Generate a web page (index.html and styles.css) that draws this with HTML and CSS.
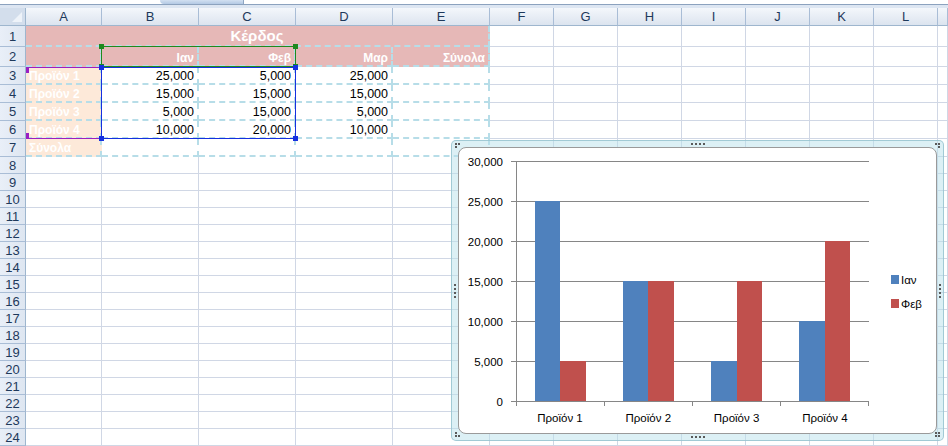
FILE: index.html
```html
<!DOCTYPE html>
<html lang="el">
<head>
<meta charset="utf-8">
<title>Κέρδος</title>
<link rel="stylesheet" href="styles.css">
</head>
<body>
<div class="sheet">
  <div class="topbar"><div class="fbar"><span class="tab"></span></div></div>

  <div class="row hdr"><div class="corner"></div><div>A</div><div>B</div><div>C</div><div>D</div><div>E</div><div>F</div><div>G</div><div>H</div><div>I</div><div>J</div><div>K</div><div>L</div><div></div></div>

  <div class="row r1"><div class="rh">1</div><div class="t pk title">Κέρδος</div><i></i><i></i><i></i><i></i><i></i><i></i><i></i><i></i></div>
  <div class="row r2"><div class="rh">2</div><div class="t pk"></div><div class="t pk hd">Ιαν</div><div class="t pk hd">Φεβ</div><div class="t pk hd">Μαρ</div><div class="t pk hd">Σύνολα</div><i></i><i></i><i></i><i></i><i></i><i></i><i></i><i></i></div>
  <div class="row r18"><div class="rh">3</div><div class="t pc">Προϊόν 1</div><div class="t num">25,000</div><div class="t num">5,000</div><div class="t num">25,000</div><div class="t"></div><i></i><i></i><i></i><i></i><i></i><i></i><i></i><i></i></div>
  <div class="row r18"><div class="rh">4</div><div class="t pc">Προϊόν 2</div><div class="t num">15,000</div><div class="t num">15,000</div><div class="t num">15,000</div><div class="t"></div><i></i><i></i><i></i><i></i><i></i><i></i><i></i><i></i></div>
  <div class="row r18"><div class="rh">5</div><div class="t pc">Προϊόν 3</div><div class="t num">5,000</div><div class="t num">15,000</div><div class="t num">5,000</div><div class="t"></div><i></i><i></i><i></i><i></i><i></i><i></i><i></i><i></i></div>
  <div class="row r18"><div class="rh">6</div><div class="t pc">Προϊόν 4</div><div class="t num">10,000</div><div class="t num">20,000</div><div class="t num">10,000</div><div class="t"></div><i></i><i></i><i></i><i></i><i></i><i></i><i></i><i></i></div>
  <div class="row r18"><div class="rh">7</div><div class="t pc">Σύνολα</div><div class="t"></div><div class="t"></div><div class="t"></div><div class="t"></div><i></i><i></i><i></i><i></i><i></i><i></i><i></i><i></i></div>

  <div class="row r17"><div class="rh">8</div><i></i><i></i><i></i><i></i><i></i><i></i><i></i><i></i><i></i><i></i><i></i><i></i><i></i></div>
  <div class="row r17"><div class="rh">9</div><i></i><i></i><i></i><i></i><i></i><i></i><i></i><i></i><i></i><i></i><i></i><i></i><i></i></div>
  <div class="row r17"><div class="rh">10</div><i></i><i></i><i></i><i></i><i></i><i></i><i></i><i></i><i></i><i></i><i></i><i></i><i></i></div>
  <div class="row r17"><div class="rh">11</div><i></i><i></i><i></i><i></i><i></i><i></i><i></i><i></i><i></i><i></i><i></i><i></i><i></i></div>
  <div class="row r17"><div class="rh">12</div><i></i><i></i><i></i><i></i><i></i><i></i><i></i><i></i><i></i><i></i><i></i><i></i><i></i></div>
  <div class="row r17"><div class="rh">13</div><i></i><i></i><i></i><i></i><i></i><i></i><i></i><i></i><i></i><i></i><i></i><i></i><i></i></div>
  <div class="row r17"><div class="rh">14</div><i></i><i></i><i></i><i></i><i></i><i></i><i></i><i></i><i></i><i></i><i></i><i></i><i></i></div>
  <div class="row r17"><div class="rh">15</div><i></i><i></i><i></i><i></i><i></i><i></i><i></i><i></i><i></i><i></i><i></i><i></i><i></i></div>
  <div class="row r17"><div class="rh">16</div><i></i><i></i><i></i><i></i><i></i><i></i><i></i><i></i><i></i><i></i><i></i><i></i><i></i></div>
  <div class="row r17"><div class="rh">17</div><i></i><i></i><i></i><i></i><i></i><i></i><i></i><i></i><i></i><i></i><i></i><i></i><i></i></div>
  <div class="row r17"><div class="rh">18</div><i></i><i></i><i></i><i></i><i></i><i></i><i></i><i></i><i></i><i></i><i></i><i></i><i></i></div>
  <div class="row r17"><div class="rh">19</div><i></i><i></i><i></i><i></i><i></i><i></i><i></i><i></i><i></i><i></i><i></i><i></i><i></i></div>
  <div class="row r17"><div class="rh">20</div><i></i><i></i><i></i><i></i><i></i><i></i><i></i><i></i><i></i><i></i><i></i><i></i><i></i></div>
  <div class="row r17"><div class="rh">21</div><i></i><i></i><i></i><i></i><i></i><i></i><i></i><i></i><i></i><i></i><i></i><i></i><i></i></div>
  <div class="row r17"><div class="rh">22</div><i></i><i></i><i></i><i></i><i></i><i></i><i></i><i></i><i></i><i></i><i></i><i></i><i></i></div>
  <div class="row r17"><div class="rh">23</div><i></i><i></i><i></i><i></i><i></i><i></i><i></i><i></i><i></i><i></i><i></i><i></i><i></i></div>
  <div class="row r17"><div class="rh">24</div><i></i><i></i><i></i><i></i><i></i><i></i><i></i><i></i><i></i><i></i><i></i><i></i><i></i></div>

  <!-- selection overlays -->
  <div class="sel sel-purple"><span class="h tl"></span><span class="h bl"></span></div>
  <div class="sel sel-green"><span class="h tl"></span><span class="h tr"></span><span class="h bl"></span><span class="h br"></span></div>
  <div class="sel sel-blue"><span class="h tl"></span><span class="h tr"></span><span class="h bl"></span><span class="h br"></span></div>

  <!-- chart object -->
  <div class="chart">
    <div class="chart-inner">
      <svg class="plot" width="477" height="285" viewBox="0 0 477 285">
        <g stroke="#868686" stroke-width="1" shape-rendering="crispEdges">
          <line x1="52" y1="13.5" x2="410" y2="13.5"/>
          <line x1="52" y1="53.5" x2="410" y2="53.5"/>
          <line x1="52" y1="93.5" x2="410" y2="93.5"/>
          <line x1="52" y1="133.5" x2="410" y2="133.5"/>
          <line x1="52" y1="173.5" x2="410" y2="173.5"/>
          <line x1="52" y1="213.5" x2="410" y2="213.5"/>
        </g>
        <g shape-rendering="crispEdges">
          <rect x="75.6" y="53" width="25.5" height="200" fill="#4F81BD"/>
          <rect x="101.1" y="213" width="25.5" height="40" fill="#C0504D"/>
          <rect x="163.85" y="133" width="25.5" height="120" fill="#4F81BD"/>
          <rect x="189.35" y="133" width="25.5" height="120" fill="#C0504D"/>
          <rect x="252.1" y="213" width="25.5" height="40" fill="#4F81BD"/>
          <rect x="277.6" y="133" width="25.5" height="120" fill="#C0504D"/>
          <rect x="340.35" y="173" width="25.5" height="80" fill="#4F81BD"/>
          <rect x="365.85" y="93" width="25.5" height="160" fill="#C0504D"/>
        </g>
        <g stroke="#868686" stroke-width="1" shape-rendering="crispEdges">
          <line x1="52" y1="253.5" x2="410" y2="253.5"/>
          <line x1="57.5" y1="13" x2="57.5" y2="258"/>
          <line x1="145.5" y1="253" x2="145.5" y2="258"/>
          <line x1="233.5" y1="253" x2="233.5" y2="258"/>
          <line x1="321.5" y1="253" x2="321.5" y2="258"/>
          <line x1="409.5" y1="253" x2="409.5" y2="258"/>
        </g>
        <g class="ylab" text-anchor="end">
          <text x="44" y="17.5">30,000</text>
          <text x="44" y="57.5">25,000</text>
          <text x="44" y="97.5">20,000</text>
          <text x="44" y="137.5">15,000</text>
          <text x="44" y="177.5">10,000</text>
          <text x="44" y="217.5">5,000</text>
          <text x="44" y="257.5">0</text>
        </g>
        <g class="xlab" text-anchor="middle">
          <text x="101" y="274">Προϊόν 1</text>
          <text x="189.3" y="274">Προϊόν 2</text>
          <text x="277.6" y="274">Προϊόν 3</text>
          <text x="365.9" y="274">Προϊόν 4</text>
        </g>
        <g class="legend">
          <rect x="432" y="127" width="8" height="9" fill="#4F81BD"/>
          <text x="442" y="135.5">Ιαν</text>
          <rect x="432" y="151" width="8" height="9" fill="#C0504D"/>
          <text x="442" y="159.5">Φεβ</text>
        </g>
      </svg>
    </div>
    <span class="grip g-tl"></span>
    <span class="grip g-tr"></span>
    <span class="grip g-bl"></span>
    <span class="grip g-br"></span>
    <span class="grip g-tm"></span>
    <span class="grip g-bm"></span>
    <span class="grip g-lm"></span>
    <span class="grip g-rm"></span>
  </div>
</div>
</body>
</html>
```

FILE: styles.css
```css
html, body {
  margin: 0;
  padding: 0;
  background: #fff;
}
body {
  font-family: "Liberation Sans", Arial, sans-serif;
  overflow: hidden;
}
.sheet {
  position: relative;
  width: 948px;
  height: 446px;
  overflow: hidden;
}

/* top strip (formula bar remnant) */
.topbar {
  height: 8px;
  background: #DDE6F2;
}
.fbar {
  height: 5px;
  box-sizing: border-box;
  background: #fff;
  border-bottom: 1px solid #8CA2BE;
  display: flex;
}
.tab {
  margin-left: 160px;
  width: 83px;
  height: 4px;
  background: linear-gradient(#D2E0F1, #B3C9E4);
  border-bottom-left-radius: 6px;
  border-right: 1px solid #8EA5C2;
}

/* grid rows */
.row {
  display: grid;
  grid-template-columns: 26px 76px 97px 97px 97px 97px repeat(7, 64px) 1fr;
}
.row > * {
  box-sizing: border-box;
  border-right: 1px solid #D0D7E5;
  border-bottom: 1px solid #D0D7E5;
  font-style: normal;
  display: flex;
  align-items: flex-end;
  padding: 0 3px 0;
  font-size: 12.5px;
  line-height: 13px;
  white-space: nowrap;
  overflow: hidden;
  min-width: 0;
  color: #000;
}
.hdr { height: 18px; }
.r1 { height: 21px; }
.r2 { height: 20px; }
.r18 { height: 18px; }
.r17 { height: 17px; }

.hdr > * {
  background: linear-gradient(#F4F7FB, #DCE4EF);
  border-right-color: #A9BDD6;
  border-bottom-color: #9EB6CE;
  justify-content: center;
  align-items: center;
  padding: 0;
  font-size: 13px;
  line-height: 15px;
  color: #1E395B;
}
.hdr > .corner {
  position: relative;
  background: #D3DEEC;
  border-right-color: #9EB6CE;
}
.corner::after {
  content: "";
  position: absolute;
  right: 3px;
  bottom: 3px;
  width: 0;
  height: 0;
  border-style: solid;
  border-width: 0 0 10px 10px;
  border-color: transparent transparent #EEF3F9 transparent;
}

.row > .rh {
  background: linear-gradient(90deg, #E9EFF8, #DEE6F1);
  border-right-color: #9EB6CE;
  border-bottom-color: #A9BDD6;
  justify-content: center;
  align-items: center;
  padding: 0;
  font-size: 13px;
  line-height: 15px;
  color: #1E395B;
}

/* table region A1:E7 */
.row > .t {
  border-right: 2px dashed #B7DDE8;
  border-bottom: 2px dashed #B7DDE8;
}
.row > .pk {
  background: #E6B8B7;
  color: #fff;
  font-weight: bold;
  font-size: 12px;
  justify-content: flex-end;
}
.row > .title {
  grid-column: span 5;
  justify-content: center;
  align-items: center;
  font-size: 15px;
  line-height: 17px;
  padding: 0;
}
.row > .pc {
  background: #FDE9D9;
  color: #fff;
  font-weight: bold;
  font-size: 12px;
}
.row > .num {
  justify-content: flex-end;
}

/* selection overlays */
.sel {
  position: absolute;
  box-sizing: border-box;
}
.sel-green {
  left: 101px;
  top: 46px;
  width: 195px;
  height: 21px;
  border: 1px solid #1E8A1E;
}
.sel-blue {
  left: 101px;
  top: 67px;
  width: 195px;
  height: 72px;
  border: 1px solid #1530E0;
}
.sel-purple {
  left: 26px;
  top: 67px;
  width: 76px;
  height: 72px;
  border-top: 1px solid #9A1FC2;
  border-bottom: 1px solid #9A1FC2;
}
.h {
  position: absolute;
  width: 5px;
  height: 5px;
}
.sel-green .h { background: #1E8A1E; }
.sel-blue .h { background: #1530E0; }
.sel-purple .h { background: #9A1FC2; width: 3px; }
.h.tl { left: -3px; top: -3px; }
.h.tr { right: -3px; top: -3px; }
.h.bl { left: -3px; bottom: -3px; }
.h.br { right: -3px; bottom: -3px; }
.sel-purple .h.tl { left: 0; top: 0; }
.sel-purple .h.bl { left: 0; bottom: 0; }

/* chart */
.chart {
  position: absolute;
  left: 451px;
  top: 140px;
  width: 493px;
  height: 301px;
  box-sizing: border-box;
  border: 1px solid rgba(150, 195, 208, 0.85);
  border-radius: 5px;
  background: rgba(185, 226, 236, 0.5);
  padding: 6px;
}
.chart-inner {
  width: 100%;
  height: 100%;
  box-sizing: border-box;
  background: #fff;
  border: 1px solid #9A9A9A;
  border-radius: 8px;
  overflow: hidden;
}
.plot {
  display: block;
}
.plot text {
  font-family: "Liberation Sans", Arial, sans-serif;
  font-size: 11.5px;
  fill: #000;
}

.grip {
  position: absolute;
  width: 2px;
  height: 2px;
  background: #5A5A5A;
}
.g-tl { left: 3px; top: 2px; box-shadow: 3px 0 #5A5A5A, 0 3px #5A5A5A; }
.g-tr { left: 483px; top: 2px; box-shadow: 3px 0 #5A5A5A, 3px 3px #5A5A5A; }
.g-bl { left: 3px; top: 291px; box-shadow: 0 3px #5A5A5A, 3px 3px #5A5A5A; }
.g-br { left: 483px; top: 291px; box-shadow: 3px 0 #5A5A5A, 3px 3px #5A5A5A, 0 3px #5A5A5A; }
.g-tm { left: 239px; top: 2px; box-shadow: 4px 0 #5A5A5A, 8px 0 #5A5A5A, 12px 0 #5A5A5A; }
.g-bm { left: 239px; top: 295px; box-shadow: 4px 0 #5A5A5A, 8px 0 #5A5A5A, 12px 0 #5A5A5A; }
.g-lm { left: 2px; top: 143px; box-shadow: 0 4px #5A5A5A, 0 8px #5A5A5A, 0 12px #5A5A5A; }
.g-rm { left: 487px; top: 143px; box-shadow: 0 4px #5A5A5A, 0 8px #5A5A5A, 0 12px #5A5A5A; }
```
